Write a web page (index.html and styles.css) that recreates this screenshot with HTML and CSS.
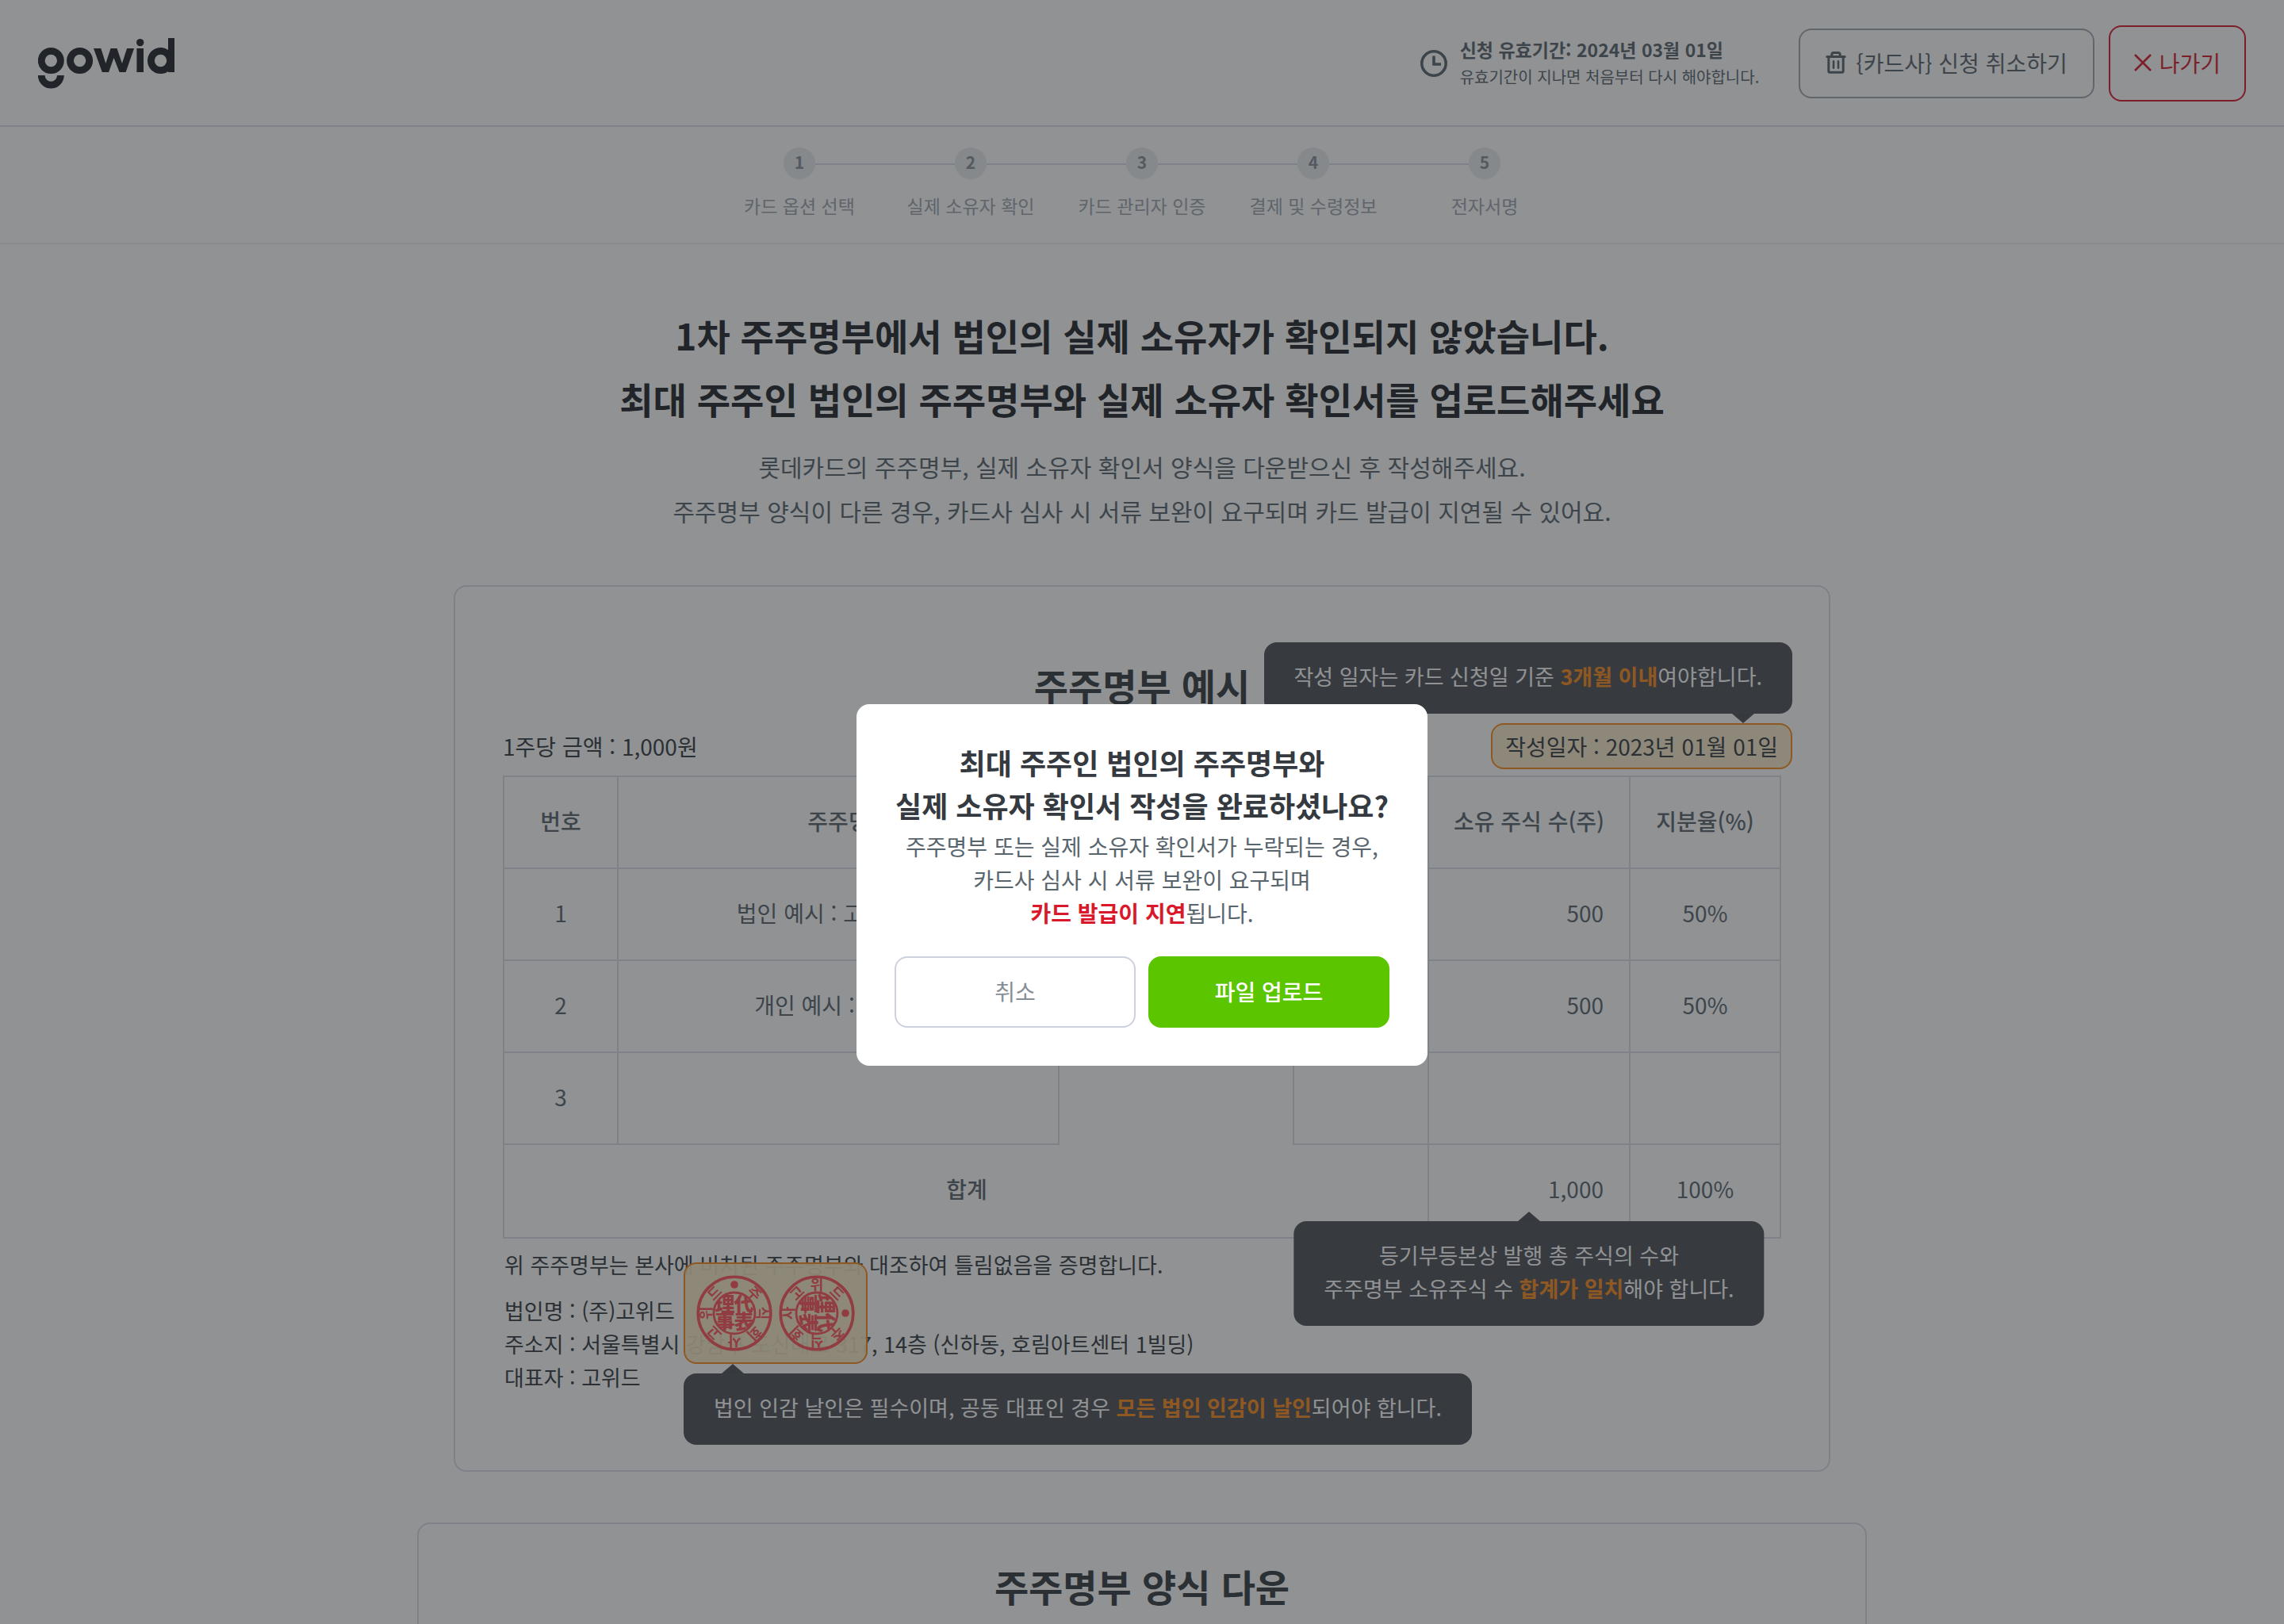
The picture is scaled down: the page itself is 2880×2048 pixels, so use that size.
FILE: index.html
```html
<!DOCTYPE html>
<html lang="ko">
<head>
<meta charset="utf-8">
<meta name="viewport" content="width=device-width, initial-scale=1">
<title>gowid</title>
<link rel="stylesheet" href="styles.css">
</head>
<body>
<div class="app">
  <header class="header">
    <a class="logo" href="#" aria-label="gowid">
      <svg width="172" height="64" viewBox="48 48 172 64" fill="none" stroke="currentColor">
        <circle cx="64.3" cy="76.5" r="12.1" stroke-width="8.8"/>
        <path d="M52.2 95a12.1 12.1 0 0 0 24.2 0" stroke-width="8.8"/>
        <circle cx="100.6" cy="76.5" r="12.1" stroke-width="8.8"/>
        <path d="M118 61h9.3l6 19 6.2-19h8l6.4 19 6.2-19h9l-10.5 30h-8l-7.1-18-6.4 18h-8.3z" fill="currentColor" stroke="none"/>
        <path d="M176.7 61v30" stroke-width="8.6"/>
        <circle cx="176.7" cy="53.6" r="4.7" fill="currentColor" stroke="none"/>
        <circle cx="202.5" cy="76.5" r="12.1" stroke-width="8.8"/>
        <path d="M216 48v43" stroke-width="8"/>
      </svg>
    </a>
    <div class="header-side">
      <div class="validity">
        <svg width="34" height="34" viewBox="0 0 34 34" fill="none" stroke="currentColor" stroke-width="3.6">
          <circle cx="17" cy="17" r="15.2"/>
          <path d="M17 7.5V18h9"/>
        </svg>
        <div>
          <p class="validity-date">신청 유효기간: 2024년 03월 01일</p>
          <p class="validity-note">유효기간이 지나면 처음부터 다시 해야합니다.</p>
        </div>
      </div>
      <div class="header-actions">
        <button class="btn btn-withdraw" type="button">
          <svg width="26" height="28" viewBox="0 0 26 28" fill="none" stroke="currentColor" stroke-width="3" stroke-linecap="round" stroke-linejoin="round">
            <path d="M1.8 6.5h22.4M7.8 6V4q0-2.4 2.4-2.4h5.6q2.4 0 2.4 2.4v2M3.8 6.5v18q0 1.8 1.8 1.8h14.8q1.8 0 1.8-1.8v-18"/>
            <path d="M10 12.2v8.6M16 12.2v8.6" stroke-width="2.6"/>
          </svg>
          <span>{카드사} 신청 취소하기</span>
        </button>
        <button class="btn btn-exit" type="button">
          <svg width="22" height="22" viewBox="0 0 22 22" fill="none" stroke="currentColor" stroke-width="2.6">
            <path d="M1 1l20 20M21 1L1 21"/>
          </svg>
          <span>나가기</span>
        </button>
      </div>
    </div>
  </header>

  <nav class="steps" aria-label="신청 단계">
    <ol class="step-list">
      <li class="step"><span class="step-no">1</span><span class="step-name">카드 옵션 선택</span></li>
      <li class="step"><span class="step-no">2</span><span class="step-name">실제 소유자 확인</span></li>
      <li class="step"><span class="step-no">3</span><span class="step-name">카드 관리자 인증</span></li>
      <li class="step"><span class="step-no">4</span><span class="step-name">결제 및 수령정보</span></li>
      <li class="step"><span class="step-no">5</span><span class="step-name">전자서명</span></li>
    </ol>
  </nav>

  <main class="main">
    <h1 class="title">1차 주주명부에서 법인의 실제 소유자가 확인되지 않았습니다.<br>최대 주주인 법인의 주주명부와 실제 소유자 확인서를 업로드해주세요</h1>
    <p class="subtitle">롯데카드의 주주명부, 실제 소유자 확인서 양식을 다운받으신 후 작성해주세요.<br>주주명부 양식이 다른 경우, 카드사 심사 시 서류 보완이 요구되며 카드 발급이 지연될 수 있어요.</p>

    <section class="card sample">
      <h2 class="card-title">주주명부 예시</h2>
      <div class="sample-meta">
        <span>1주당 금액 : 1,000원</span>
        <div class="date-chip">
          작성일자 : 2023년 01월 01일
          <div class="tip tip-date">작성 일자는 카드 신청일 기준 <strong>3개월 이내</strong>여야합니다.</div>
        </div>
      </div>
      <table class="holders">
        <colgroup><col class="c-no"><col class="c-name"><col class="c-id"><col class="c-kind"><col class="c-shares"><col class="c-ratio"></colgroup>
        <thead>
          <tr><th>번호</th><th>주주명</th><th></th><th></th><th>소유 주식 수(주)</th><th>지분율(%)</th></tr>
        </thead>
        <tbody>
          <tr><td>1</td><td>법인 예시 : 고위드(주)</td><td></td><td></td><td class="num">500</td><td>50%</td></tr>
          <tr><td>2</td><td>개인 예시 : 고위드</td><td></td><td></td><td class="num">500</td><td>50%</td></tr>
          <tr><td>3</td><td></td><td class="open"></td><td></td><td></td><td></td></tr>
        </tbody>
        <tfoot>
          <tr>
            <th class="sum" colspan="2">
              <span class="sum-label">합계</span>
            </th>
            <td class="open"></td>
            <td class="sum-end"></td>
            <td class="num total">1,000
              <div class="tip tip-total">등기부등본상 발행 총 주식의 수와<br>주주명부 소유주식 수 <strong>합계가 일치</strong>해야 합니다.</div>
            </td>
            <td>100%</td>
          </tr>
        </tfoot>
      </table>
      <div class="sample-foot">
        <p>위 주주명부는 본사에 비치된 주주명부와 대조하여 틀림없음을 증명합니다.</p>
        <p>법인명 : (주)고위드<br>주소지 : 서울특별시 강남구 도신대로 317, 14층 (신하동, 호림아트센터 1빌딩)<br>대표자 : 고위드</p>
        <div class="seal-chip">
          <svg class="seals" width="200" height="96" viewBox="0 0 200 96">
            <defs>
              <clipPath id="seal-clip"><circle r="26"/></clipPath>
              <g id="seal">
                <circle r="45.8" fill="none" stroke="currentColor" stroke-width="3.6"/>
                <circle r="26" fill="none" stroke="currentColor" stroke-width="2.8"/>
                <circle cy="-36" r="4.8"/>
                <g class="seal-ring">
                  <text y="-29" transform="rotate(45)">주</text>
                  <text y="-29" transform="rotate(90)">식</text>
                  <text y="-29" transform="rotate(135)">회</text>
                  <text y="-29" transform="rotate(180)">사</text>
                  <text y="-29" transform="rotate(225)">고</text>
                  <text y="-29" transform="rotate(270)">위</text>
                  <text y="-29" transform="rotate(315)">드</text>
                </g>
                <g class="seal-core" clip-path="url(#seal-clip)">
                  <text x="-12" y="-2">理</text>
                  <text x="12" y="-2">代</text>
                  <text x="-12" y="20">事</text>
                  <text x="12" y="20">表</text>
                </g>
              </g>
            </defs>
            <use href="#seal" transform="translate(48 48)"/>
            <use href="#seal" transform="translate(152 48) rotate(90)"/>
          </svg>
          <div class="tip tip-seal">법인 인감 날인은 필수이며, 공동 대표인 경우 <strong>모든 법인 인감이 날인</strong>되어야 합니다.</div>
        </div>
      </div>
    </section>

    <section class="card download">
      <h2 class="card-title">주주명부 양식 다운</h2>
    </section>
  </main>
</div>

<div class="overlay">
  <div class="modal" role="dialog" aria-modal="true" aria-labelledby="modal-title">
    <h2 class="modal-title" id="modal-title">최대 주주인 법인의 주주명부와<br>실제 소유자 확인서 작성을 완료하셨나요?</h2>
    <p class="modal-text">주주명부 또는 실제 소유자 확인서가 누락되는 경우,<br>카드사 심사 시 서류 보완이 요구되며<br><strong>카드 발급이 지연</strong>됩니다.</p>
    <div class="modal-actions">
      <button class="btn btn-cancel" type="button">취소</button>
      <button class="btn btn-upload" type="button">파일 업로드</button>
    </div>
  </div>
</div>
</body>
</html>
```
FILE: styles.css
```css
:root {
  --ink: #212529;
  --ink-2: #343a40;
  --text: #59656d;
  --line: #dadce5;
  --gray: #9da7af;
  --red: #d9192b;
  --orange: #fb8b1b;
  --green: #5bc500;
}

* { box-sizing: border-box; margin: 0; padding: 0; }

body {
  font-family: "Noto Sans CJK KR", sans-serif;
  font-size: 28px;
  line-height: 42px;
  color: var(--text);
  background: #fff;
}

.app { height: 100vh; overflow: hidden; }

.header {
  display: flex;
  align-items: center;
  justify-content: space-between;
  height: 160px;
  padding: 2px 48px 0;
  border-bottom: 2px solid var(--line);
}
.logo { display: block; color: var(--ink); }
.logo svg { display: block; }
.header-side { display: flex; align-items: center; gap: 50px; }
.validity { display: flex; align-items: center; gap: 16px; }
.validity-date { font-size: 23px; line-height: 34px; font-weight: 700; }
.validity-note { font-size: 20px; line-height: 36px; }
.header-actions { display: flex; align-items: center; gap: 18px; }

.btn {
  display: flex;
  align-items: center;
  justify-content: center;
  padding-bottom: 3px;
  font: inherit;
  background: transparent;
  border: 2px solid transparent;
  border-radius: 16px;
  cursor: pointer;
}
.btn-withdraw { gap: 12px; height: 88px; padding: 0 32px 2px; color: var(--text); border-color: var(--gray); }
.btn-exit { gap: 10px; height: 96px; padding: 0 30px 2px; color: var(--red); border-color: var(--red); }

.steps { padding: 26px 0 28px; border-bottom: 2px solid #eef0f2; }
.step-list { display: flex; justify-content: center; list-style: none; }
.step {
  position: relative;
  display: flex;
  flex-direction: column;
  align-items: center;
  gap: 14px;
  width: 216px;
}
.step + .step::before {
  content: "";
  position: absolute;
  top: 20px;
  left: -88px;
  width: 176px;
  height: 2px;
  background: var(--line);
}
.step-no {
  width: 40px;
  height: 40px;
  border-radius: 50%;
  font-size: 21px;
  line-height: 37px;
  font-weight: 700;
  text-align: center;
  color: #868e96;
  background: #e9ecef;
}
.step-name { font-size: 23px; line-height: 38px; color: #9da5ad; }

.main { padding-top: 74px; }
.title { font-size: 46px; line-height: 80px; font-weight: 700; text-align: center; color: var(--ink); }
.subtitle { margin-top: 18px; font-size: 30px; line-height: 56px; text-align: center; }

.card { margin: 66px auto 0; border: 2px solid var(--line); border-radius: 16px; }
.card-title { font-size: 47px; line-height: 72px; font-weight: 700; text-align: center; color: var(--ink-2); }
.sample { max-width: 1736px; padding: 88px 60px 96px; color: var(--ink-2); }
.download { max-width: 1828px; margin-top: 64px; padding: 42px 60px 200px; }

.sample-meta { display: flex; align-items: center; justify-content: space-between; margin: 12px 0 8px; }
.date-chip {
  position: relative;
  margin-right: -14px;
  padding: 6px 16px;
  border: 2px solid var(--orange);
  border-radius: 16px;
  background: rgba(251, 233, 197, 0.9);
}

.tip {
  position: absolute;
  padding: 22px 38px 26px;
  border-radius: 16px;
  font-size: 27px;
  text-align: center;
  white-space: nowrap;
  color: #fff;
  background: rgba(70, 73, 79, 0.97);
}
.tip::after {
  content: "";
  position: absolute;
  width: 28px;
  height: 12px;
  background: #4b4e54;
}
.tip strong { font-weight: 700; color: var(--orange); }
.tip-date { right: -2px; bottom: calc(100% + 14px); }
.tip-date::after { right: 48px; top: 100%; clip-path: polygon(0 0, 100% 0, 50% 100%); }
.tip-total { left: 50%; top: 96px; transform: translateX(-50%); }
.tip-total::after { left: calc(50% - 14px); bottom: 100%; clip-path: polygon(0 100%, 100% 100%, 50% 0); }
.tip-seal { left: -2px; top: calc(100% + 14px); }
.tip-seal::after { left: 48px; bottom: 100%; clip-path: polygon(0 100%, 100% 100%, 50% 0); }

.holders { width: 100%; table-layout: fixed; border-collapse: collapse; color: var(--text); }
.c-no { width: 144px; }
.c-name { width: 556px; }
.c-id { width: 296px; }
.c-kind { width: 170px; }
.c-shares { width: 254px; }
.holders th,
.holders td {
  position: relative;
  height: 116px;
  padding-bottom: 4px;
  border: 2px solid var(--line);
  text-align: center;
  font-weight: 400;
}
.holders th { font-weight: 500; }
.holders td.num { padding-right: 32px; text-align: right; }
.holders tfoot th,
.holders tfoot td { height: 118px; padding-bottom: 6px; }
.holders tbody .open { border-bottom-style: hidden; }
.holders tfoot .open { border-top-style: hidden; border-left-style: hidden; border-right-style: hidden; }
.holders tfoot .sum { border-right-style: hidden; }
.holders tfoot .sum-end { border-left-style: hidden; }
.sum-label { position: absolute; left: 0; width: 1166px; top: 34px; }

.sample-foot {
  position: relative;
  display: flex;
  flex-direction: column;
  gap: 16px;
  margin-top: 12px;
  padding-left: 2px;
  font-size: 27px;
}
.seal-chip {
  position: absolute;
  left: 228px;
  top: 18px;
  padding: 14px;
  border: 2px solid var(--orange);
  border-radius: 16px;
  background: rgba(251, 233, 197, 0.93);
}
.seals { display: block; color: #ff5357; fill: currentColor; }
.seals text { text-anchor: middle; }
.seal-ring { font-size: 18px; font-weight: 700; }
.seal-core { font-size: 25px; font-weight: 900; }

.overlay {
  position: fixed;
  inset: 0;
  display: flex;
  align-items: center;
  justify-content: center;
  padding-top: 184px;
  background: rgba(33, 37, 41, 0.5);
}
.modal { width: 720px; padding: 46px 48px 48px; border-radius: 16px; text-align: center; background: #fff; }
.modal-title { font-size: 36px; line-height: 54px; font-weight: 700; color: var(--ink-2); }
.modal-text { margin-top: 4px; }
.modal-text strong { font-weight: 700; color: var(--red); }
.modal-actions { display: flex; gap: 16px; margin-top: 34px; }
.modal-actions .btn { flex: 1; height: 90px; }
.btn-cancel { color: #868e96; border-color: #cdd1dd; }
.btn-upload { font-weight: 500; color: #fff; background: var(--green); }
```
